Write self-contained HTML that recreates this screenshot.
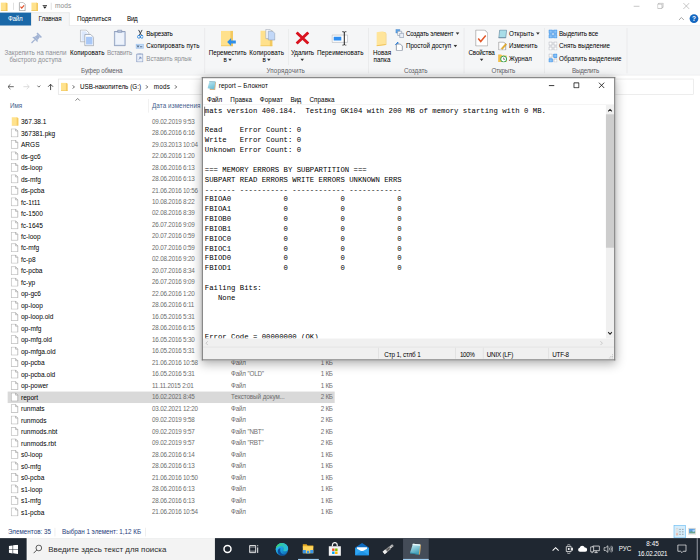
<!DOCTYPE html>
<html><head><meta charset="utf-8"><title>mods</title>
<style>
html,body{margin:0;padding:0;background:#fff;overflow:hidden}
body{width:700px;height:560px;position:relative;font-family:"Liberation Sans",sans-serif}
#s{position:absolute;left:0;top:0;width:1280px;height:1024px;transform:scale(0.546875);transform-origin:0 0;overflow:hidden;background:#fff}
#s div,#s span,#s svg{box-sizing:border-box}
.mono{font-family:"Liberation Mono",monospace}
</style></head><body><div id="s">
<div style="position:absolute;left:0.00px;top:0.00px;width:1280.00px;height:23.00px;background:#fff"></div>
<svg style="position:absolute;left:0.00px;top:3.50px" width="16.00" height="16.00" viewBox="0 0 16 16"><path d="M1.5 0.5h9.5l2.500 1.500v13.500H1.500z" fill="#ffe28c"/><path d="M10.500 0.500l3 1.500v13.500h-3z" fill="#f4ca62"/><path d="M1.500 14.500h12v1h-12z" fill="#eec258"/></svg>
<div style="position:absolute;left:23.50px;top:5.00px;width:1.00px;height:13.00px;background:#c8c8c8"></div>
<svg style="position:absolute;left:33.00px;top:3.50px" width="16.00" height="16.00" viewBox="0 0 16 16"><path d="M2.500 0.500h7l3.500 3.500v11.500h-10.500z" fill="#fff" stroke="#777" stroke-width="1"/><path d="M4.500 8l2.300 2.800 4.200-5" fill="none" stroke="#e0502a" stroke-width="2.200"/></svg>
<svg style="position:absolute;left:56.00px;top:3.50px" width="16.00" height="16.00" viewBox="0 0 16 16"><path d="M1.5 0.5h9.5l2.500 1.500v13.500H1.500z" fill="#ffe28c"/><path d="M10.500 0.500l3 1.500v13.500h-3z" fill="#f4ca62"/><path d="M1.500 14.500h12v1h-12z" fill="#eec258"/></svg>
<svg style="position:absolute;left:75.50px;top:6.00px" width="12.00" height="12.00" viewBox="0 0 12 12"><path d="M2 3h8v1.4H2z M2.5 6h7L6 10z" fill="#222"/></svg>
<div style="position:absolute;left:93.00px;top:5.00px;width:1.00px;height:13.00px;background:#c8c8c8"></div>
<span style="position:absolute;left:100.57px;top:4.09px;font-size:12px;line-height:15.60px;letter-spacing:0.162px;color:#8c8c8c;white-space:pre;">mods</span>
<svg style="position:absolute;left:1158.00px;top:5.00px" width="12.00" height="12.00" viewBox="0 0 12 12"><path d="M0.5 6.5h11" stroke="#9a9a9a" stroke-width="1"/></svg>
<svg style="position:absolute;left:1202.00px;top:5.00px" width="12.00" height="12.00" viewBox="0 0 12 12"><path d="M0.5 2.5h8v8h-8z M2.5 2.5v-2h8v8h-2" fill="none" stroke="#9a9a9a" stroke-width="1"/></svg>
<svg style="position:absolute;left:1249.00px;top:5.00px" width="12.00" height="12.00" viewBox="0 0 12 12"><path d="M0.5 0.5l11 11M11.5 0.5l-11 11" stroke="#9a9a9a" stroke-width="1"/></svg>
<div style="position:absolute;left:0.00px;top:23.00px;width:1280.00px;height:23.60px;background:#fff;border-bottom:1px solid #dadbdc"></div>
<div style="position:absolute;left:0.00px;top:23.00px;width:56.50px;height:23.60px;background:#1a68a8"></div>
<span style="position:absolute;left:14.83px;top:27.27px;font-size:11.5px;line-height:14.95px;letter-spacing:-0.495px;color:#fff;white-space:pre;">Файл</span>
<div style="position:absolute;left:56.50px;top:23.00px;width:70.00px;height:24.60px;background:#f5f6f7;border:1px solid #dadbdc;border-bottom:none"></div>
<span style="position:absolute;left:70.40px;top:27.27px;font-size:11.5px;line-height:14.95px;letter-spacing:-0.245px;color:#000;white-space:pre;">Главная</span>
<span style="position:absolute;left:140.80px;top:27.27px;font-size:11.5px;line-height:14.95px;letter-spacing:-0.133px;color:#000;white-space:pre;">Поделиться</span>
<span style="position:absolute;left:232.23px;top:27.27px;font-size:11.5px;line-height:14.95px;letter-spacing:-0.535px;color:#000;white-space:pre;">Вид</span>
<svg style="position:absolute;left:1240.00px;top:28.00px" width="12.00" height="12.00" viewBox="0 0 12 12"><path d="M1.5 8.5L6 4l4.5 4.5" fill="none" stroke="#777" stroke-width="1.2"/></svg>
<div style="position:absolute;left:1261.0px;top:26px;width:16px;height:16px;border-radius:8px;background:#1467c0;color:#fff;font-size:12px;font-weight:bold;line-height:16px;text-align:center">?</div>
<div style="position:absolute;left:0.00px;top:46.60px;width:1280.00px;height:91.40px;background:#f5f6f7;border-bottom:1px solid #dadbdc"></div>
<svg style="position:absolute;left:51.75px;top:58.15px" width="26.33" height="26.33" viewBox="-6 -6 12 12"><g transform="rotate(45)" fill="#a2b3d3"><path d="M-2.600 -4.850h5.200v1.300h-5.200z"/><path d="M-1.400 -3.650h2.800l0.400 3h-3.600z"/><path d="M-1.800 -0.650h3.600l1.300 1.600h-6.200z"/><path d="M-0.500 0.850h1v4h-1z"/></g></svg>
<span style="position:absolute;left:8.23px;top:89.07px;font-size:11.5px;line-height:14.95px;letter-spacing:0.055px;color:#8d8f94;white-space:pre;">Закрепить на панели</span>
<span style="position:absolute;left:17.37px;top:101.69px;font-size:11.5px;line-height:14.95px;letter-spacing:0.017px;color:#8d8f94;white-space:pre;">быстрого доступа</span>
<svg style="position:absolute;left:145.92px;top:54.49px" width="26.51" height="30.54" viewBox="0 0 14.500 16.700"><path d="M0.500 0.500h5.800l2.700 2.700v9h-8.500z" fill="#fff" stroke="#a3a9b3" stroke-width="0.700"/><path d="M1.600 1.800h4.200l2 2v7.300H1.600z" fill="#dbe7fb"/><path d="M5 5h6l2.800 2.800v8.400H5z" fill="#fff" stroke="#9199a6" stroke-width="0.700"/><path d="M6.200 7.200h6.500v7.800H6.200z" fill="#a9c8f7"/></svg>
<span style="position:absolute;left:128.00px;top:89.07px;font-size:11.5px;line-height:14.95px;letter-spacing:0.117px;color:#000;white-space:pre;">Копировать</span>
<svg style="position:absolute;left:208.09px;top:54.49px" width="21.94" height="30.54" viewBox="0 0 12 16.700"><path d="M0.500 2h11v14.200h-11z" fill="#cfdcf0" stroke="#7f8fb0" stroke-width="0.800"/><path d="M1.800 3.300h8.400v11.600H1.800z" fill="#eef3fb"/><path d="M4 0.400h4v2.400H4z" fill="#b7c4da" stroke="#7f8fb0" stroke-width="0.600"/></svg>
<span style="position:absolute;left:195.66px;top:89.07px;font-size:11.5px;line-height:14.95px;letter-spacing:-0.379px;color:#8d8f94;white-space:pre;">Вставить</span>
<svg style="position:absolute;left:250.88px;top:53.76px" width="11.34" height="17.01" viewBox="0 0 6.200 9.300"><path d="M1.300 0.300L4.300 6M4.900 0.300L1.900 6" stroke="#3d4450" stroke-width="1" fill="none"/><circle cx="1.600" cy="7.300" r="1.450" fill="none" stroke="#2d86dc" stroke-width="1"/><circle cx="4.600" cy="7.300" r="1.450" fill="none" stroke="#2d86dc" stroke-width="1"/></svg>
<span style="position:absolute;left:267.52px;top:54.70px;font-size:11.5px;line-height:14.95px;letter-spacing:-0.404px;color:#000;white-space:pre;">Вырезать</span>
<svg style="position:absolute;left:248.14px;top:79.91px" width="14.99" height="9.14" viewBox="0 0 8.200 5"><path d="M0.300 0.300h7.600v4.400H0.300z" fill="#c4dcf8" stroke="#8db7ea" stroke-width="0.600"/><path d="M1.500 1.500l0.900 2 0.900-2M4.300 3h2.400" stroke="#1f3550" stroke-width="0.600" fill="none"/></svg>
<span style="position:absolute;left:267.52px;top:77.46px;font-size:11.5px;line-height:14.95px;letter-spacing:0.135px;color:#000;white-space:pre;">Скопировать путь</span>
<svg style="position:absolute;left:248.50px;top:96.73px" width="13.35" height="17.19" viewBox="0 0 7.300 9.400"><path d="M0.500 1h6.300v8h-6.300z" fill="#e9eff9" stroke="#7f93bd" stroke-width="0.800"/><path d="M2.300 0.300h2.700v1.300H2.300z" fill="#aebbd4"/><path d="M2.500 6.500l2.200-2.200M3 4.200h1.800v1.800" stroke="#6f86b8" stroke-width="0.800" fill="none"/></svg>
<span style="position:absolute;left:267.52px;top:99.95px;font-size:11.5px;line-height:14.95px;letter-spacing:-0.109px;color:#8d8f94;white-space:pre;">Вставить ярлык</span>
<span style="position:absolute;left:148.11px;top:121.62px;font-size:11.5px;line-height:14.95px;letter-spacing:-0.188px;color:#5f6268;white-space:pre;">Буфер обмена</span>
<div style="position:absolute;left:373.94px;top:51.00px;width:1.00px;height:83.00px;background:#e1e2e3"></div>
<svg style="position:absolute;left:404.11px;top:55.77px" width="27.79" height="28.89" viewBox="0 0 15.200 15.800"><path d="M0 0h12v15.600H0z" fill="#ffe18c"/><path d="M9.500 0H12v15.600H9.500z" fill="#f3c95f"/><path d="M0 14.800h12v0.800H0z" fill="#eec255"/><path d="M6.200 11.400l4-3.900v2.300h4.700v3.200h-4.700v2.300z" fill="#2d8ee8"/></svg>
<span style="position:absolute;left:381.81px;top:89.07px;font-size:11.5px;line-height:14.95px;letter-spacing:-0.138px;color:#000;white-space:pre;">Переместить</span>
<span style="position:absolute;left:408.59px;top:101.69px;font-size:11.5px;line-height:14.95px;letter-spacing:-0.428px;color:#000;white-space:pre;">в</span>
<svg style="position:absolute;left:416.55px;top:107.34px" width="7.31" height="5.49" viewBox="0 0 4 3"><path d="M0 0h4L2 2.500z" fill="#333"/></svg>
<svg style="position:absolute;left:475.79px;top:52.66px" width="27.79" height="32.00" viewBox="0 0 15.200 17.500"><g transform="translate(0 1.700)"><path d="M0 0h12v15.600H0z" fill="#ffe18c"/><path d="M9.500 0H12v15.600H9.500z" fill="#f3c95f"/><path d="M0 14.800h12v0.800H0z" fill="#eec255"/></g><path d="M5.500 0.400h4.300l2.200 2.200v7H5.500z" fill="#f4f7fc" stroke="#a0a8b5" stroke-width="0.600"/><path d="M8 2.200h4.300l2.200 2.200v6.600H8z" fill="#c2d8f8" stroke="#8f9db5" stroke-width="0.600"/></svg>
<span style="position:absolute;left:455.86px;top:89.07px;font-size:11.5px;line-height:14.95px;letter-spacing:0.154px;color:#000;white-space:pre;">Копировать</span>
<span style="position:absolute;left:479.90px;top:101.69px;font-size:11.5px;line-height:14.95px;letter-spacing:-0.428px;color:#000;white-space:pre;">в</span>
<svg style="position:absolute;left:487.86px;top:107.34px" width="7.31" height="5.49" viewBox="0 0 4 3"><path d="M0 0h4L2 2.500z" fill="#333"/></svg>
<div style="position:absolute;left:526.63px;top:53.00px;width:1.00px;height:66.00px;background:#e4e5e6"></div>
<svg style="position:absolute;left:539.98px;top:57.23px" width="26.15" height="25.05" viewBox="0 0 14.300 13.700"><path d="M1.300 1.300l11.700 11.100M13 1.300L1.300 12.400" stroke="#d9131f" stroke-width="2.900" fill="none"/></svg>
<span style="position:absolute;left:532.11px;top:89.07px;font-size:11.5px;line-height:14.95px;letter-spacing:-0.264px;color:#000;white-space:pre;">Удалить</span>
<svg style="position:absolute;left:549.49px;top:106.97px" width="7.31" height="5.49" viewBox="0 0 4 3"><path d="M0 0h4L2 2.500z" fill="#333"/></svg>
<svg style="position:absolute;left:606.17px;top:56.69px" width="31.09" height="26.70" viewBox="0 0 17 14.600"><path d="M0.700 3.900h15.500v7.300H0.700z" fill="#fff" stroke="#b9bcc2" stroke-width="0.700"/><path d="M2.300 5.700h7.600v3.600H2.300z" fill="#2f8ef0"/><path d="M10.800 0.500h1.200Q12.900 0.500 12.900 1.500Q12.900 0.500 13.800 0.500H15M12.900 1.500V13.100M10.800 14.100h1.200Q12.900 14.100 12.900 13.100Q12.900 14.100 13.800 14.100H15" stroke="#222" stroke-width="1" fill="none"/></svg>
<span style="position:absolute;left:579.66px;top:89.07px;font-size:11.5px;line-height:14.95px;letter-spacing:0.056px;color:#000;white-space:pre;">Переименовать</span>
<span style="position:absolute;left:487.31px;top:121.62px;font-size:11.5px;line-height:14.95px;letter-spacing:0.179px;color:#5f6268;white-space:pre;">Упорядочить</span>
<div style="position:absolute;left:672.91px;top:51.00px;width:1.00px;height:83.00px;background:#e1e2e3"></div>
<svg style="position:absolute;left:687.54px;top:57.05px" width="19.38" height="28.16" viewBox="0 0 10.600 15.400"><path d="M0.300 1.200L6 0l3.500 1.500v12.300L0.300 15.200z" fill="#ffe59a"/><path d="M6 0l3.500 1.500 0.800 1v11l-0.800 0.300V2z" fill="#f2c75c"/><path d="M0.300 14.200l9.200-1.400v1L0.300 15.200z" fill="#f0c35a"/></svg>
<span style="position:absolute;left:682.06px;top:89.07px;font-size:11.5px;line-height:14.95px;letter-spacing:-0.078px;color:#000;white-space:pre;">Новая</span>
<span style="position:absolute;left:682.97px;top:101.69px;font-size:11.5px;line-height:14.95px;letter-spacing:0.111px;color:#000;white-space:pre;">папка</span>
<svg style="position:absolute;left:722.83px;top:53.39px" width="15.91" height="16.46" viewBox="0 0 8.700 9"><path d="M0.400 0.400h4v3.600h-4z" fill="#5aa3e8" stroke="#4b86c4" stroke-width="0.500"/><path d="M2.300 2.300h4v4.200h-4z" fill="#fff" stroke="#7f8ea6" stroke-width="0.600"/><path d="M4.300 4.300h4v4.300h-4z" fill="#e9eef8" stroke="#7f8ea6" stroke-width="0.600"/></svg>
<span style="position:absolute;left:742.40px;top:54.70px;font-size:11.5px;line-height:14.95px;letter-spacing:-0.312px;color:#000;white-space:pre;">Создать элемент</span>
<svg style="position:absolute;left:832.91px;top:59.43px" width="7.31" height="5.49" viewBox="0 0 4 3"><path d="M0 0h4L2 2.500z" fill="#333"/></svg>
<svg style="position:absolute;left:722.29px;top:75.89px" width="16.46" height="17.37" viewBox="0 0 9 9.500"><path d="M1.500 2.500h4l2 2v4.500h-6z" fill="#fff" stroke="#7f8a9a" stroke-width="0.8"/><path d="M0.500 3.500L3 0.500v2" stroke="#2b7bd3" stroke-width="1" fill="none"/></svg>
<span style="position:absolute;left:742.40px;top:77.46px;font-size:11.5px;line-height:14.95px;letter-spacing:-0.136px;color:#000;white-space:pre;">Простой доступ</span>
<svg style="position:absolute;left:829.26px;top:82.29px" width="7.31" height="5.49" viewBox="0 0 4 3"><path d="M0 0h4L2 2.500z" fill="#333"/></svg>
<span style="position:absolute;left:738.74px;top:121.62px;font-size:11.5px;line-height:14.95px;letter-spacing:-0.104px;color:#5f6268;white-space:pre;">Создать</span>
<div style="position:absolute;left:848.46px;top:51.00px;width:1.00px;height:83.00px;background:#e1e2e3"></div>
<svg style="position:absolute;left:868.57px;top:53.94px" width="23.77" height="31.09" viewBox="0 0 13 17"><path d="M0.500 0.500h9l3 3v13h-12z" fill="#fff" stroke="#9a9a9a" stroke-width="0.8"/><path d="M3 9l2.500 3 5-6" fill="none" stroke="#e2582a" stroke-width="1.500"/></svg>
<span style="position:absolute;left:856.69px;top:89.07px;font-size:11.5px;line-height:14.95px;letter-spacing:-0.369px;color:#000;white-space:pre;">Свойства</span>
<svg style="position:absolute;left:876.80px;top:106.97px" width="7.31" height="5.49" viewBox="0 0 4 3"><path d="M0 0h4L2 2.500z" fill="#333"/></svg>
<svg style="position:absolute;left:910.63px;top:53.94px" width="16.46" height="16.46" viewBox="0 0 9 9"><path d="M1.500 0.500h7L7.500 8.500h-7z" fill="#a8dde8" stroke="#6d8fa5" stroke-width="0.7"/><path d="M0.500 8.500h7" stroke="#55708a" stroke-width="1"/></svg>
<span style="position:absolute;left:930.74px;top:54.70px;font-size:11.5px;line-height:14.95px;letter-spacing:0.079px;color:#000;white-space:pre;">Открыть</span>
<svg style="position:absolute;left:980.11px;top:59.43px" width="7.31" height="5.49" viewBox="0 0 4 3"><path d="M0 0h4L2 2.500z" fill="#333"/></svg>
<svg style="position:absolute;left:910.63px;top:75.89px" width="16.46" height="16.46" viewBox="0 0 9 9"><path d="M0.500 0.500h5l2 2v6h-7z" fill="#fff" stroke="#8a8a8a" stroke-width="0.7"/><path d="M3 7l4.500-5 1 1-4.500 5z" fill="#f0b429" stroke="#a87a10" stroke-width="0.400"/></svg>
<span style="position:absolute;left:930.74px;top:77.46px;font-size:11.5px;line-height:14.95px;letter-spacing:0.030px;color:#000;white-space:pre;">Изменить</span>
<svg style="position:absolute;left:909.71px;top:97.83px" width="18.29" height="16.46" viewBox="0 0 10 9"><path d="M0.500 1h3l1 1h4.500v6.500h-8.500z" fill="#f2c14e"/><circle cx="6" cy="5.500" r="3" fill="#fff" stroke="#2e9e4f" stroke-width="1"/><path d="M6 4v1.700h1.500" stroke="#333" stroke-width="0.600" fill="none"/></svg>
<span style="position:absolute;left:930.74px;top:99.95px;font-size:11.5px;line-height:14.95px;letter-spacing:0.016px;color:#000;white-space:pre;">Журнал</span>
<span style="position:absolute;left:898.74px;top:121.62px;font-size:11.5px;line-height:14.95px;letter-spacing:-0.313px;color:#5f6268;white-space:pre;">Открыть</span>
<div style="position:absolute;left:994.74px;top:51.00px;width:1.00px;height:83.00px;background:#e1e2e3"></div>
<svg style="position:absolute;left:1002.97px;top:53.94px" width="16.46" height="16.46" viewBox="0 0 9 9"><path d="M0.400 0.400h3.400v3.400H0.400zM5.200 0.400h3.400v3.400H5.200zM0.400 5.200h3.400v3.400H0.400zM5.200 5.200h3.400v3.400H5.200z" fill="#8cc4f7" stroke="#3c90e6" stroke-width="0.800"/></svg>
<span style="position:absolute;left:1022.17px;top:54.70px;font-size:11.5px;line-height:14.95px;letter-spacing:-0.255px;color:#000;white-space:pre;">Выделить все</span>
<svg style="position:absolute;left:1002.97px;top:75.89px" width="16.46" height="16.46" viewBox="0 0 9 9"><path d="M0.400 0.400h3.200v3.200H0.400zM5.400 0.400h3.200v3.200H5.400zM0.400 5.400h3.200v3.200H0.400zM5.400 5.400h3.200v3.200H5.400z" fill="#fff" stroke="#b0b5bd" stroke-width="0.700"/></svg>
<span style="position:absolute;left:1022.17px;top:77.46px;font-size:11.5px;line-height:14.95px;letter-spacing:-0.097px;color:#000;white-space:pre;">Снять выделение</span>
<svg style="position:absolute;left:1002.97px;top:97.83px" width="16.46" height="16.46" viewBox="0 0 9 9"><path d="M5.200 0.400h3.400v3.400H5.200zM0.400 5.200h3.400v3.400H0.400z" fill="#8cc4f7" stroke="#3c90e6" stroke-width="0.800"/><path d="M0.400 0.400h3.200v3.200H0.400zM5.400 5.400h3.200v3.200H5.400z" fill="#fff" stroke="#b0b5bd" stroke-width="0.700"/></svg>
<span style="position:absolute;left:1022.17px;top:99.95px;font-size:11.5px;line-height:14.95px;letter-spacing:0.039px;color:#000;white-space:pre;">Обратить выделение</span>
<span style="position:absolute;left:1045.94px;top:121.62px;font-size:11.5px;line-height:14.95px;letter-spacing:-0.460px;color:#5f6268;white-space:pre;">Выделить</span>
<div style="position:absolute;left:1145.60px;top:51.00px;width:1.00px;height:83.00px;background:#e1e2e3"></div>
<div style="position:absolute;left:0.00px;top:138.00px;width:1280.00px;height:40.00px;background:#fff"></div>
<svg style="position:absolute;left:12.50px;top:152.30px" width="13.00" height="13.00" viewBox="0 0 16 16"><path d="M15 8H2M7.5 2.5L2 8l5.500 5.500" fill="none" stroke="#5c5c5c" stroke-width="2.100"/></svg>
<svg style="position:absolute;left:42.00px;top:152.30px" width="13.00" height="13.00" viewBox="0 0 16 16"><path d="M1 8h13M8.500 2.500L14 8l-5.500 5.500" fill="none" stroke="#d2d2d2" stroke-width="1.700"/></svg>
<svg style="position:absolute;left:67.00px;top:154.00px" width="8.00" height="8.00" viewBox="0 0 8 8"><path d="M1.300 2.500L4 5.300l2.700-2.800" fill="none" stroke="#505050" stroke-width="1.500"/></svg>
<svg style="position:absolute;left:86.00px;top:151.80px" width="13.00" height="14.00" viewBox="0 0 16 16"><path d="M8 15V2M2.500 7.500L8 2l5.500 5.500" fill="none" stroke="#3f3f3f" stroke-width="2.100"/></svg>
<div style="position:absolute;left:106.00px;top:144.00px;width:820.00px;height:29.00px;background:#fff;border:1px solid #d9d9d9"></div>
<svg style="position:absolute;left:110.00px;top:150.50px" width="16.00" height="16.00" viewBox="0 0 16 16"><path d="M1.5 0.5h9.5l2.500 1.500v13.500H1.500z" fill="#ffe28c"/><path d="M10.500 0.500l3 1.500v13.500h-3z" fill="#f4ca62"/><path d="M1.500 14.500h12v1h-12z" fill="#eec258"/></svg>
<svg style="position:absolute;left:130.00px;top:153.50px" width="10.00" height="10.00" viewBox="0 0 10 10"><path d="M3 2L6 5l-3 3" fill="none" stroke="#3a3a3a" stroke-width="1.500"/></svg>
<span style="position:absolute;left:146.29px;top:151.43px;font-size:11.5px;line-height:14.95px;letter-spacing:0.014px;color:#000;white-space:pre;">USB-накопитель (G:)</span>
<svg style="position:absolute;left:264.00px;top:153.50px" width="10.00" height="10.00" viewBox="0 0 10 10"><path d="M3 2L6 5l-3 3" fill="none" stroke="#3a3a3a" stroke-width="1.500"/></svg>
<span style="position:absolute;left:281.23px;top:151.43px;font-size:11.5px;line-height:14.95px;letter-spacing:0.376px;color:#000;white-space:pre;">mods</span>
<svg style="position:absolute;left:317.00px;top:153.50px" width="10.00" height="10.00" viewBox="0 0 10 10"><path d="M3 2L6 5l-3 3" fill="none" stroke="#3a3a3a" stroke-width="1.500"/></svg>
<div style="position:absolute;left:938.00px;top:144.00px;width:330.50px;height:29.00px;background:#fff;border:1px solid #dedede"></div>
<svg style="position:absolute;left:136.00px;top:178.00px" width="12.00" height="8.00" viewBox="0 0 12 8"><path d="M2 6L6 2l4 4" fill="none" stroke="#666" stroke-width="1.500"/></svg>
<span style="position:absolute;left:18.29px;top:186.35px;font-size:11.5px;line-height:14.95px;letter-spacing:-0.152px;color:#44608c;white-space:pre;">Имя</span>
<div style="position:absolute;left:271.00px;top:181.00px;width:1.00px;height:25.00px;background:#e5e5e5"></div>
<span style="position:absolute;left:277.94px;top:186.35px;font-size:11.5px;line-height:14.95px;letter-spacing:0.163px;color:#44608c;white-space:pre;">Дата изменения</span>
<div style="position:absolute;left:415.00px;top:181.00px;width:1.00px;height:25.00px;background:#e5e5e5"></div>
<span style="position:absolute;left:422.40px;top:186.35px;font-size:11.5px;line-height:14.95px;letter-spacing:-0.447px;color:#44608c;white-space:pre;">Тип</span>
<div style="position:absolute;left:549.00px;top:181.00px;width:1.00px;height:25.00px;background:#e5e5e5"></div>
<span style="position:absolute;left:557.71px;top:186.35px;font-size:11.5px;line-height:14.95px;letter-spacing:-0.461px;color:#44608c;white-space:pre;">Размер</span>
<div style="position:absolute;left:616.00px;top:181.00px;width:1.00px;height:25.00px;background:#e5e5e5"></div>
<svg style="position:absolute;left:20.00px;top:214.00px" width="16.00" height="16.00" viewBox="0 0 16 16"><path d="M1.5 0.5h9.5l2.500 1.500v13.500H1.500z" fill="#ffe28c"/><path d="M10.500 0.500l3 1.500v13.500h-3z" fill="#f4ca62"/><path d="M1.500 14.500h12v1h-12z" fill="#eec258"/></svg>
<span style="position:absolute;left:38.30px;top:216.10px;font-size:12px;line-height:15.60px;letter-spacing:0.000px;color:#000;white-space:pre;">367.38.1</span>
<span style="position:absolute;left:278.00px;top:215.03px;font-size:11.5px;line-height:14.95px;letter-spacing:-0.360px;color:#6d6d6d;white-space:pre;">09.02.2019 9:53</span>
<span style="position:absolute;left:422.50px;top:215.33px;font-size:11.5px;line-height:14.95px;letter-spacing:-0.315px;color:#6d6d6d;white-space:pre;">Папка с файлами</span>
<svg style="position:absolute;left:20.00px;top:235.00px" width="16.00" height="16.00" viewBox="0 0 16 16"><path d="M0.500 0.500h8l4 4v11h-12z" fill="#fff" stroke="#8f8f8f" stroke-width="1"/><path d="M8.500 0.500v4h4" fill="none" stroke="#8f8f8f" stroke-width="1"/></svg>
<span style="position:absolute;left:38.30px;top:237.10px;font-size:12px;line-height:15.60px;letter-spacing:0.000px;color:#000;white-space:pre;">367381.pkg</span>
<span style="position:absolute;left:278.00px;top:236.03px;font-size:11.5px;line-height:14.95px;letter-spacing:-0.360px;color:#6d6d6d;white-space:pre;">28.06.2016 6:16</span>
<span style="position:absolute;left:422.50px;top:236.33px;font-size:11.5px;line-height:14.95px;letter-spacing:-0.320px;color:#6d6d6d;white-space:pre;">Файл "PKG"</span>
<span style="position:absolute;left:586.33px;top:236.03px;font-size:11.5px;line-height:14.95px;letter-spacing:-0.417px;color:#6d6d6d;white-space:pre;">1 КБ</span>
<svg style="position:absolute;left:20.00px;top:256.00px" width="16.00" height="16.00" viewBox="0 0 16 16"><path d="M0.500 0.500h8l4 4v11h-12z" fill="#fff" stroke="#8f8f8f" stroke-width="1"/><path d="M8.500 0.500v4h4" fill="none" stroke="#8f8f8f" stroke-width="1"/></svg>
<span style="position:absolute;left:38.30px;top:258.10px;font-size:12px;line-height:15.60px;letter-spacing:0.000px;color:#000;white-space:pre;">ARGS</span>
<span style="position:absolute;left:278.00px;top:257.02px;font-size:11.5px;line-height:14.95px;letter-spacing:-0.364px;color:#6d6d6d;white-space:pre;">29.03.2013 10:04</span>
<span style="position:absolute;left:422.50px;top:257.32px;font-size:11.5px;line-height:14.95px;letter-spacing:-0.353px;color:#6d6d6d;white-space:pre;">Файл</span>
<span style="position:absolute;left:586.33px;top:257.02px;font-size:11.5px;line-height:14.95px;letter-spacing:-0.417px;color:#6d6d6d;white-space:pre;">1 КБ</span>
<svg style="position:absolute;left:20.00px;top:277.00px" width="16.00" height="16.00" viewBox="0 0 16 16"><path d="M0.500 0.500h8l4 4v11h-12z" fill="#fff" stroke="#8f8f8f" stroke-width="1"/><path d="M8.500 0.500v4h4" fill="none" stroke="#8f8f8f" stroke-width="1"/></svg>
<span style="position:absolute;left:38.30px;top:279.10px;font-size:12px;line-height:15.60px;letter-spacing:0.000px;color:#000;white-space:pre;">ds-gc6</span>
<span style="position:absolute;left:278.00px;top:278.02px;font-size:11.5px;line-height:14.95px;letter-spacing:-0.360px;color:#6d6d6d;white-space:pre;">22.06.2016 1:20</span>
<span style="position:absolute;left:422.50px;top:278.32px;font-size:11.5px;line-height:14.95px;letter-spacing:-0.353px;color:#6d6d6d;white-space:pre;">Файл</span>
<span style="position:absolute;left:586.33px;top:278.02px;font-size:11.5px;line-height:14.95px;letter-spacing:-0.417px;color:#6d6d6d;white-space:pre;">1 КБ</span>
<svg style="position:absolute;left:20.00px;top:298.00px" width="16.00" height="16.00" viewBox="0 0 16 16"><path d="M0.500 0.500h8l4 4v11h-12z" fill="#fff" stroke="#8f8f8f" stroke-width="1"/><path d="M8.500 0.500v4h4" fill="none" stroke="#8f8f8f" stroke-width="1"/></svg>
<span style="position:absolute;left:38.30px;top:300.10px;font-size:12px;line-height:15.60px;letter-spacing:0.000px;color:#000;white-space:pre;">ds-loop</span>
<span style="position:absolute;left:278.00px;top:299.02px;font-size:11.5px;line-height:14.95px;letter-spacing:-0.360px;color:#6d6d6d;white-space:pre;">28.06.2016 6:13</span>
<span style="position:absolute;left:422.50px;top:299.32px;font-size:11.5px;line-height:14.95px;letter-spacing:-0.353px;color:#6d6d6d;white-space:pre;">Файл</span>
<span style="position:absolute;left:586.33px;top:299.02px;font-size:11.5px;line-height:14.95px;letter-spacing:-0.417px;color:#6d6d6d;white-space:pre;">1 КБ</span>
<svg style="position:absolute;left:20.00px;top:319.00px" width="16.00" height="16.00" viewBox="0 0 16 16"><path d="M0.500 0.500h8l4 4v11h-12z" fill="#fff" stroke="#8f8f8f" stroke-width="1"/><path d="M8.500 0.500v4h4" fill="none" stroke="#8f8f8f" stroke-width="1"/></svg>
<span style="position:absolute;left:38.30px;top:321.10px;font-size:12px;line-height:15.60px;letter-spacing:0.000px;color:#000;white-space:pre;">ds-mfg</span>
<span style="position:absolute;left:278.00px;top:320.02px;font-size:11.5px;line-height:14.95px;letter-spacing:-0.360px;color:#6d6d6d;white-space:pre;">28.06.2016 6:13</span>
<span style="position:absolute;left:422.50px;top:320.32px;font-size:11.5px;line-height:14.95px;letter-spacing:-0.353px;color:#6d6d6d;white-space:pre;">Файл</span>
<span style="position:absolute;left:586.33px;top:320.02px;font-size:11.5px;line-height:14.95px;letter-spacing:-0.417px;color:#6d6d6d;white-space:pre;">1 КБ</span>
<svg style="position:absolute;left:20.00px;top:340.00px" width="16.00" height="16.00" viewBox="0 0 16 16"><path d="M0.500 0.500h8l4 4v11h-12z" fill="#fff" stroke="#8f8f8f" stroke-width="1"/><path d="M8.500 0.500v4h4" fill="none" stroke="#8f8f8f" stroke-width="1"/></svg>
<span style="position:absolute;left:38.30px;top:342.10px;font-size:12px;line-height:15.60px;letter-spacing:0.000px;color:#000;white-space:pre;">ds-pcba</span>
<span style="position:absolute;left:278.00px;top:341.02px;font-size:11.5px;line-height:14.95px;letter-spacing:-0.364px;color:#6d6d6d;white-space:pre;">21.06.2016 10:56</span>
<span style="position:absolute;left:422.50px;top:341.32px;font-size:11.5px;line-height:14.95px;letter-spacing:-0.353px;color:#6d6d6d;white-space:pre;">Файл</span>
<span style="position:absolute;left:586.33px;top:341.02px;font-size:11.5px;line-height:14.95px;letter-spacing:-0.417px;color:#6d6d6d;white-space:pre;">1 КБ</span>
<svg style="position:absolute;left:20.00px;top:361.00px" width="16.00" height="16.00" viewBox="0 0 16 16"><path d="M0.500 0.500h8l4 4v11h-12z" fill="#fff" stroke="#8f8f8f" stroke-width="1"/><path d="M8.500 0.500v4h4" fill="none" stroke="#8f8f8f" stroke-width="1"/></svg>
<span style="position:absolute;left:38.30px;top:363.10px;font-size:12px;line-height:15.60px;letter-spacing:0.000px;color:#000;white-space:pre;">fc-1t11</span>
<span style="position:absolute;left:278.00px;top:362.02px;font-size:11.5px;line-height:14.95px;letter-spacing:-0.360px;color:#6d6d6d;white-space:pre;">10.08.2016 8:22</span>
<span style="position:absolute;left:422.50px;top:362.32px;font-size:11.5px;line-height:14.95px;letter-spacing:-0.353px;color:#6d6d6d;white-space:pre;">Файл</span>
<span style="position:absolute;left:586.33px;top:362.02px;font-size:11.5px;line-height:14.95px;letter-spacing:-0.417px;color:#6d6d6d;white-space:pre;">1 КБ</span>
<svg style="position:absolute;left:20.00px;top:382.00px" width="16.00" height="16.00" viewBox="0 0 16 16"><path d="M0.500 0.500h8l4 4v11h-12z" fill="#fff" stroke="#8f8f8f" stroke-width="1"/><path d="M8.500 0.500v4h4" fill="none" stroke="#8f8f8f" stroke-width="1"/></svg>
<span style="position:absolute;left:38.30px;top:384.10px;font-size:12px;line-height:15.60px;letter-spacing:0.000px;color:#000;white-space:pre;">fc-1500</span>
<span style="position:absolute;left:278.00px;top:383.02px;font-size:11.5px;line-height:14.95px;letter-spacing:-0.360px;color:#6d6d6d;white-space:pre;">02.08.2016 8:39</span>
<span style="position:absolute;left:422.50px;top:383.32px;font-size:11.5px;line-height:14.95px;letter-spacing:-0.353px;color:#6d6d6d;white-space:pre;">Файл</span>
<span style="position:absolute;left:586.33px;top:383.02px;font-size:11.5px;line-height:14.95px;letter-spacing:-0.417px;color:#6d6d6d;white-space:pre;">1 КБ</span>
<svg style="position:absolute;left:20.00px;top:403.00px" width="16.00" height="16.00" viewBox="0 0 16 16"><path d="M0.500 0.500h8l4 4v11h-12z" fill="#fff" stroke="#8f8f8f" stroke-width="1"/><path d="M8.500 0.500v4h4" fill="none" stroke="#8f8f8f" stroke-width="1"/></svg>
<span style="position:absolute;left:38.30px;top:405.10px;font-size:12px;line-height:15.60px;letter-spacing:0.000px;color:#000;white-space:pre;">fc-1645</span>
<span style="position:absolute;left:278.00px;top:404.02px;font-size:11.5px;line-height:14.95px;letter-spacing:-0.360px;color:#6d6d6d;white-space:pre;">26.07.2016 9:09</span>
<span style="position:absolute;left:422.50px;top:404.32px;font-size:11.5px;line-height:14.95px;letter-spacing:-0.353px;color:#6d6d6d;white-space:pre;">Файл</span>
<span style="position:absolute;left:586.33px;top:404.02px;font-size:11.5px;line-height:14.95px;letter-spacing:-0.417px;color:#6d6d6d;white-space:pre;">1 КБ</span>
<svg style="position:absolute;left:20.00px;top:424.00px" width="16.00" height="16.00" viewBox="0 0 16 16"><path d="M0.500 0.500h8l4 4v11h-12z" fill="#fff" stroke="#8f8f8f" stroke-width="1"/><path d="M8.500 0.500v4h4" fill="none" stroke="#8f8f8f" stroke-width="1"/></svg>
<span style="position:absolute;left:38.30px;top:426.10px;font-size:12px;line-height:15.60px;letter-spacing:0.000px;color:#000;white-space:pre;">fc-loop</span>
<span style="position:absolute;left:278.00px;top:425.02px;font-size:11.5px;line-height:14.95px;letter-spacing:-0.360px;color:#6d6d6d;white-space:pre;">20.07.2016 0:59</span>
<span style="position:absolute;left:422.50px;top:425.32px;font-size:11.5px;line-height:14.95px;letter-spacing:-0.353px;color:#6d6d6d;white-space:pre;">Файл</span>
<span style="position:absolute;left:586.33px;top:425.02px;font-size:11.5px;line-height:14.95px;letter-spacing:-0.417px;color:#6d6d6d;white-space:pre;">1 КБ</span>
<svg style="position:absolute;left:20.00px;top:445.00px" width="16.00" height="16.00" viewBox="0 0 16 16"><path d="M0.500 0.500h8l4 4v11h-12z" fill="#fff" stroke="#8f8f8f" stroke-width="1"/><path d="M8.500 0.500v4h4" fill="none" stroke="#8f8f8f" stroke-width="1"/></svg>
<span style="position:absolute;left:38.30px;top:447.10px;font-size:12px;line-height:15.60px;letter-spacing:0.000px;color:#000;white-space:pre;">fc-mfg</span>
<span style="position:absolute;left:278.00px;top:446.02px;font-size:11.5px;line-height:14.95px;letter-spacing:-0.360px;color:#6d6d6d;white-space:pre;">20.07.2016 0:59</span>
<span style="position:absolute;left:422.50px;top:446.32px;font-size:11.5px;line-height:14.95px;letter-spacing:-0.353px;color:#6d6d6d;white-space:pre;">Файл</span>
<span style="position:absolute;left:586.33px;top:446.02px;font-size:11.5px;line-height:14.95px;letter-spacing:-0.417px;color:#6d6d6d;white-space:pre;">1 КБ</span>
<svg style="position:absolute;left:20.00px;top:466.00px" width="16.00" height="16.00" viewBox="0 0 16 16"><path d="M0.500 0.500h8l4 4v11h-12z" fill="#fff" stroke="#8f8f8f" stroke-width="1"/><path d="M8.500 0.500v4h4" fill="none" stroke="#8f8f8f" stroke-width="1"/></svg>
<span style="position:absolute;left:38.30px;top:468.10px;font-size:12px;line-height:15.60px;letter-spacing:0.000px;color:#000;white-space:pre;">fc-p8</span>
<span style="position:absolute;left:278.00px;top:467.02px;font-size:11.5px;line-height:14.95px;letter-spacing:-0.360px;color:#6d6d6d;white-space:pre;">02.08.2016 9:20</span>
<span style="position:absolute;left:422.50px;top:467.32px;font-size:11.5px;line-height:14.95px;letter-spacing:-0.353px;color:#6d6d6d;white-space:pre;">Файл</span>
<span style="position:absolute;left:586.33px;top:467.02px;font-size:11.5px;line-height:14.95px;letter-spacing:-0.417px;color:#6d6d6d;white-space:pre;">1 КБ</span>
<svg style="position:absolute;left:20.00px;top:487.00px" width="16.00" height="16.00" viewBox="0 0 16 16"><path d="M0.500 0.500h8l4 4v11h-12z" fill="#fff" stroke="#8f8f8f" stroke-width="1"/><path d="M8.500 0.500v4h4" fill="none" stroke="#8f8f8f" stroke-width="1"/></svg>
<span style="position:absolute;left:38.30px;top:489.10px;font-size:12px;line-height:15.60px;letter-spacing:0.000px;color:#000;white-space:pre;">fc-pcba</span>
<span style="position:absolute;left:278.00px;top:488.02px;font-size:11.5px;line-height:14.95px;letter-spacing:-0.360px;color:#6d6d6d;white-space:pre;">20.07.2016 8:34</span>
<span style="position:absolute;left:422.50px;top:488.32px;font-size:11.5px;line-height:14.95px;letter-spacing:-0.353px;color:#6d6d6d;white-space:pre;">Файл</span>
<span style="position:absolute;left:586.33px;top:488.02px;font-size:11.5px;line-height:14.95px;letter-spacing:-0.417px;color:#6d6d6d;white-space:pre;">1 КБ</span>
<svg style="position:absolute;left:20.00px;top:508.00px" width="16.00" height="16.00" viewBox="0 0 16 16"><path d="M0.500 0.500h8l4 4v11h-12z" fill="#fff" stroke="#8f8f8f" stroke-width="1"/><path d="M8.500 0.500v4h4" fill="none" stroke="#8f8f8f" stroke-width="1"/></svg>
<span style="position:absolute;left:38.30px;top:510.10px;font-size:12px;line-height:15.60px;letter-spacing:0.000px;color:#000;white-space:pre;">fc-yp</span>
<span style="position:absolute;left:278.00px;top:509.02px;font-size:11.5px;line-height:14.95px;letter-spacing:-0.360px;color:#6d6d6d;white-space:pre;">26.07.2016 9:09</span>
<span style="position:absolute;left:422.50px;top:509.32px;font-size:11.5px;line-height:14.95px;letter-spacing:-0.353px;color:#6d6d6d;white-space:pre;">Файл</span>
<span style="position:absolute;left:586.33px;top:509.02px;font-size:11.5px;line-height:14.95px;letter-spacing:-0.417px;color:#6d6d6d;white-space:pre;">1 КБ</span>
<svg style="position:absolute;left:20.00px;top:529.00px" width="16.00" height="16.00" viewBox="0 0 16 16"><path d="M0.500 0.500h8l4 4v11h-12z" fill="#fff" stroke="#8f8f8f" stroke-width="1"/><path d="M8.500 0.500v4h4" fill="none" stroke="#8f8f8f" stroke-width="1"/></svg>
<span style="position:absolute;left:38.30px;top:531.10px;font-size:12px;line-height:15.60px;letter-spacing:0.000px;color:#000;white-space:pre;">op-gc6</span>
<span style="position:absolute;left:278.00px;top:530.02px;font-size:11.5px;line-height:14.95px;letter-spacing:-0.360px;color:#6d6d6d;white-space:pre;">22.06.2016 1:20</span>
<span style="position:absolute;left:422.50px;top:530.32px;font-size:11.5px;line-height:14.95px;letter-spacing:-0.353px;color:#6d6d6d;white-space:pre;">Файл</span>
<span style="position:absolute;left:586.33px;top:530.02px;font-size:11.5px;line-height:14.95px;letter-spacing:-0.417px;color:#6d6d6d;white-space:pre;">1 КБ</span>
<svg style="position:absolute;left:20.00px;top:550.00px" width="16.00" height="16.00" viewBox="0 0 16 16"><path d="M0.500 0.500h8l4 4v11h-12z" fill="#fff" stroke="#8f8f8f" stroke-width="1"/><path d="M8.500 0.500v4h4" fill="none" stroke="#8f8f8f" stroke-width="1"/></svg>
<span style="position:absolute;left:38.30px;top:552.10px;font-size:12px;line-height:15.60px;letter-spacing:0.000px;color:#000;white-space:pre;">op-loop</span>
<span style="position:absolute;left:278.00px;top:551.02px;font-size:11.5px;line-height:14.95px;letter-spacing:-0.357px;color:#6d6d6d;white-space:pre;">28.06.2016 6:11</span>
<span style="position:absolute;left:422.50px;top:551.32px;font-size:11.5px;line-height:14.95px;letter-spacing:-0.353px;color:#6d6d6d;white-space:pre;">Файл</span>
<span style="position:absolute;left:586.33px;top:551.02px;font-size:11.5px;line-height:14.95px;letter-spacing:-0.417px;color:#6d6d6d;white-space:pre;">1 КБ</span>
<svg style="position:absolute;left:20.00px;top:571.00px" width="16.00" height="16.00" viewBox="0 0 16 16"><path d="M0.500 0.500h8l4 4v11h-12z" fill="#fff" stroke="#8f8f8f" stroke-width="1"/><path d="M8.500 0.500v4h4" fill="none" stroke="#8f8f8f" stroke-width="1"/></svg>
<span style="position:absolute;left:38.30px;top:573.10px;font-size:12px;line-height:15.60px;letter-spacing:0.000px;color:#000;white-space:pre;">op-loop.old</span>
<span style="position:absolute;left:278.00px;top:572.02px;font-size:11.5px;line-height:14.95px;letter-spacing:-0.360px;color:#6d6d6d;white-space:pre;">16.05.2016 5:31</span>
<span style="position:absolute;left:422.50px;top:572.32px;font-size:11.5px;line-height:14.95px;letter-spacing:-0.316px;color:#6d6d6d;white-space:pre;">Файл "OLD"</span>
<span style="position:absolute;left:586.33px;top:572.02px;font-size:11.5px;line-height:14.95px;letter-spacing:-0.417px;color:#6d6d6d;white-space:pre;">1 КБ</span>
<svg style="position:absolute;left:20.00px;top:592.00px" width="16.00" height="16.00" viewBox="0 0 16 16"><path d="M0.500 0.500h8l4 4v11h-12z" fill="#fff" stroke="#8f8f8f" stroke-width="1"/><path d="M8.500 0.500v4h4" fill="none" stroke="#8f8f8f" stroke-width="1"/></svg>
<span style="position:absolute;left:38.30px;top:594.10px;font-size:12px;line-height:15.60px;letter-spacing:0.000px;color:#000;white-space:pre;">op-mfg</span>
<span style="position:absolute;left:278.00px;top:593.02px;font-size:11.5px;line-height:14.95px;letter-spacing:-0.360px;color:#6d6d6d;white-space:pre;">28.06.2016 6:15</span>
<span style="position:absolute;left:422.50px;top:593.32px;font-size:11.5px;line-height:14.95px;letter-spacing:-0.353px;color:#6d6d6d;white-space:pre;">Файл</span>
<span style="position:absolute;left:586.33px;top:593.02px;font-size:11.5px;line-height:14.95px;letter-spacing:-0.417px;color:#6d6d6d;white-space:pre;">1 КБ</span>
<svg style="position:absolute;left:20.00px;top:613.00px" width="16.00" height="16.00" viewBox="0 0 16 16"><path d="M0.500 0.500h8l4 4v11h-12z" fill="#fff" stroke="#8f8f8f" stroke-width="1"/><path d="M8.500 0.500v4h4" fill="none" stroke="#8f8f8f" stroke-width="1"/></svg>
<span style="position:absolute;left:38.30px;top:615.10px;font-size:12px;line-height:15.60px;letter-spacing:0.000px;color:#000;white-space:pre;">op-mfg.old</span>
<span style="position:absolute;left:278.00px;top:614.02px;font-size:11.5px;line-height:14.95px;letter-spacing:-0.360px;color:#6d6d6d;white-space:pre;">16.05.2016 5:30</span>
<span style="position:absolute;left:422.50px;top:614.32px;font-size:11.5px;line-height:14.95px;letter-spacing:-0.316px;color:#6d6d6d;white-space:pre;">Файл "OLD"</span>
<span style="position:absolute;left:586.33px;top:614.02px;font-size:11.5px;line-height:14.95px;letter-spacing:-0.417px;color:#6d6d6d;white-space:pre;">1 КБ</span>
<svg style="position:absolute;left:20.00px;top:634.00px" width="16.00" height="16.00" viewBox="0 0 16 16"><path d="M0.500 0.500h8l4 4v11h-12z" fill="#fff" stroke="#8f8f8f" stroke-width="1"/><path d="M8.500 0.500v4h4" fill="none" stroke="#8f8f8f" stroke-width="1"/></svg>
<span style="position:absolute;left:38.30px;top:636.10px;font-size:12px;line-height:15.60px;letter-spacing:0.000px;color:#000;white-space:pre;">op-mfga.old</span>
<span style="position:absolute;left:278.00px;top:635.02px;font-size:11.5px;line-height:14.95px;letter-spacing:-0.360px;color:#6d6d6d;white-space:pre;">16.05.2016 5:31</span>
<span style="position:absolute;left:422.50px;top:635.32px;font-size:11.5px;line-height:14.95px;letter-spacing:-0.316px;color:#6d6d6d;white-space:pre;">Файл "OLD"</span>
<span style="position:absolute;left:586.33px;top:635.02px;font-size:11.5px;line-height:14.95px;letter-spacing:-0.417px;color:#6d6d6d;white-space:pre;">1 КБ</span>
<svg style="position:absolute;left:20.00px;top:655.00px" width="16.00" height="16.00" viewBox="0 0 16 16"><path d="M0.500 0.500h8l4 4v11h-12z" fill="#fff" stroke="#8f8f8f" stroke-width="1"/><path d="M8.500 0.500v4h4" fill="none" stroke="#8f8f8f" stroke-width="1"/></svg>
<span style="position:absolute;left:38.30px;top:657.10px;font-size:12px;line-height:15.60px;letter-spacing:0.000px;color:#000;white-space:pre;">op-pcba</span>
<span style="position:absolute;left:278.00px;top:656.02px;font-size:11.5px;line-height:14.95px;letter-spacing:-0.364px;color:#6d6d6d;white-space:pre;">21.06.2016 10:58</span>
<span style="position:absolute;left:422.50px;top:656.32px;font-size:11.5px;line-height:14.95px;letter-spacing:-0.353px;color:#6d6d6d;white-space:pre;">Файл</span>
<span style="position:absolute;left:586.33px;top:656.02px;font-size:11.5px;line-height:14.95px;letter-spacing:-0.417px;color:#6d6d6d;white-space:pre;">1 КБ</span>
<svg style="position:absolute;left:20.00px;top:676.00px" width="16.00" height="16.00" viewBox="0 0 16 16"><path d="M0.500 0.500h8l4 4v11h-12z" fill="#fff" stroke="#8f8f8f" stroke-width="1"/><path d="M8.500 0.500v4h4" fill="none" stroke="#8f8f8f" stroke-width="1"/></svg>
<span style="position:absolute;left:38.30px;top:678.10px;font-size:12px;line-height:15.60px;letter-spacing:0.000px;color:#000;white-space:pre;">op-pcba.old</span>
<span style="position:absolute;left:278.00px;top:677.02px;font-size:11.5px;line-height:14.95px;letter-spacing:-0.360px;color:#6d6d6d;white-space:pre;">16.05.2016 5:31</span>
<span style="position:absolute;left:422.50px;top:677.32px;font-size:11.5px;line-height:14.95px;letter-spacing:-0.316px;color:#6d6d6d;white-space:pre;">Файл "OLD"</span>
<span style="position:absolute;left:586.33px;top:677.02px;font-size:11.5px;line-height:14.95px;letter-spacing:-0.417px;color:#6d6d6d;white-space:pre;">1 КБ</span>
<svg style="position:absolute;left:20.00px;top:697.00px" width="16.00" height="16.00" viewBox="0 0 16 16"><path d="M0.500 0.500h8l4 4v11h-12z" fill="#fff" stroke="#8f8f8f" stroke-width="1"/><path d="M8.500 0.500v4h4" fill="none" stroke="#8f8f8f" stroke-width="1"/></svg>
<span style="position:absolute;left:38.30px;top:699.10px;font-size:12px;line-height:15.60px;letter-spacing:0.000px;color:#000;white-space:pre;">op-power</span>
<span style="position:absolute;left:278.00px;top:698.02px;font-size:11.5px;line-height:14.95px;letter-spacing:-0.353px;color:#6d6d6d;white-space:pre;">11.11.2015 2:01</span>
<span style="position:absolute;left:422.50px;top:698.32px;font-size:11.5px;line-height:14.95px;letter-spacing:-0.353px;color:#6d6d6d;white-space:pre;">Файл</span>
<span style="position:absolute;left:586.33px;top:698.02px;font-size:11.5px;line-height:14.95px;letter-spacing:-0.417px;color:#6d6d6d;white-space:pre;">1 КБ</span>
<div style="position:absolute;left:14.00px;top:715.50px;width:598.00px;height:21.00px;background:#d9d9d9"></div>
<svg style="position:absolute;left:20.00px;top:718.00px" width="16.00" height="16.00" viewBox="0 0 16 16"><path d="M0.500 0.500h8l4 4v11h-12z" fill="#fff" stroke="#8f8f8f" stroke-width="1"/><path d="M8.500 0.500v4h4" fill="none" stroke="#8f8f8f" stroke-width="1"/></svg>
<span style="position:absolute;left:38.30px;top:720.10px;font-size:12px;line-height:15.60px;letter-spacing:0.000px;color:#000;white-space:pre;">report</span>
<span style="position:absolute;left:278.00px;top:719.02px;font-size:11.5px;line-height:14.95px;letter-spacing:-0.360px;color:#6d6d6d;white-space:pre;">16.02.2021 8:45</span>
<span style="position:absolute;left:422.50px;top:719.32px;font-size:11.5px;line-height:14.95px;letter-spacing:-0.140px;color:#6d6d6d;white-space:pre;">Текстовый докум...</span>
<span style="position:absolute;left:586.33px;top:719.02px;font-size:11.5px;line-height:14.95px;letter-spacing:-0.417px;color:#6d6d6d;white-space:pre;">2 КБ</span>
<svg style="position:absolute;left:20.00px;top:739.00px" width="16.00" height="16.00" viewBox="0 0 16 16"><path d="M0.500 0.500h8l4 4v11h-12z" fill="#fff" stroke="#8f8f8f" stroke-width="1"/><path d="M8.500 0.500v4h4" fill="none" stroke="#8f8f8f" stroke-width="1"/></svg>
<span style="position:absolute;left:38.30px;top:741.10px;font-size:12px;line-height:15.60px;letter-spacing:0.000px;color:#000;white-space:pre;">runmats</span>
<span style="position:absolute;left:278.00px;top:740.02px;font-size:11.5px;line-height:14.95px;letter-spacing:-0.364px;color:#6d6d6d;white-space:pre;">03.02.2021 12:20</span>
<span style="position:absolute;left:422.50px;top:740.32px;font-size:11.5px;line-height:14.95px;letter-spacing:-0.353px;color:#6d6d6d;white-space:pre;">Файл</span>
<span style="position:absolute;left:586.33px;top:740.02px;font-size:11.5px;line-height:14.95px;letter-spacing:-0.417px;color:#6d6d6d;white-space:pre;">2 КБ</span>
<svg style="position:absolute;left:20.00px;top:760.00px" width="16.00" height="16.00" viewBox="0 0 16 16"><path d="M0.500 0.500h8l4 4v11h-12z" fill="#fff" stroke="#8f8f8f" stroke-width="1"/><path d="M8.500 0.500v4h4" fill="none" stroke="#8f8f8f" stroke-width="1"/></svg>
<span style="position:absolute;left:38.30px;top:762.10px;font-size:12px;line-height:15.60px;letter-spacing:0.000px;color:#000;white-space:pre;">runmods</span>
<span style="position:absolute;left:278.00px;top:761.02px;font-size:11.5px;line-height:14.95px;letter-spacing:-0.360px;color:#6d6d6d;white-space:pre;">09.02.2019 9:58</span>
<span style="position:absolute;left:422.50px;top:761.32px;font-size:11.5px;line-height:14.95px;letter-spacing:-0.353px;color:#6d6d6d;white-space:pre;">Файл</span>
<span style="position:absolute;left:586.33px;top:761.02px;font-size:11.5px;line-height:14.95px;letter-spacing:-0.417px;color:#6d6d6d;white-space:pre;">2 КБ</span>
<svg style="position:absolute;left:20.00px;top:781.00px" width="16.00" height="16.00" viewBox="0 0 16 16"><path d="M0.500 0.500h8l4 4v11h-12z" fill="#fff" stroke="#8f8f8f" stroke-width="1"/><path d="M8.500 0.500v4h4" fill="none" stroke="#8f8f8f" stroke-width="1"/></svg>
<span style="position:absolute;left:38.30px;top:783.10px;font-size:12px;line-height:15.60px;letter-spacing:0.000px;color:#000;white-space:pre;">runmods.nbt</span>
<span style="position:absolute;left:278.00px;top:782.02px;font-size:11.5px;line-height:14.95px;letter-spacing:-0.360px;color:#6d6d6d;white-space:pre;">09.02.2019 9:57</span>
<span style="position:absolute;left:422.50px;top:782.32px;font-size:11.5px;line-height:14.95px;letter-spacing:-0.313px;color:#6d6d6d;white-space:pre;">Файл "NBT"</span>
<span style="position:absolute;left:586.33px;top:782.02px;font-size:11.5px;line-height:14.95px;letter-spacing:-0.417px;color:#6d6d6d;white-space:pre;">2 КБ</span>
<svg style="position:absolute;left:20.00px;top:802.00px" width="16.00" height="16.00" viewBox="0 0 16 16"><path d="M0.500 0.500h8l4 4v11h-12z" fill="#fff" stroke="#8f8f8f" stroke-width="1"/><path d="M8.500 0.500v4h4" fill="none" stroke="#8f8f8f" stroke-width="1"/></svg>
<span style="position:absolute;left:38.30px;top:804.10px;font-size:12px;line-height:15.60px;letter-spacing:0.000px;color:#000;white-space:pre;">runmods.rbt</span>
<span style="position:absolute;left:278.00px;top:803.02px;font-size:11.5px;line-height:14.95px;letter-spacing:-0.360px;color:#6d6d6d;white-space:pre;">09.02.2019 9:57</span>
<span style="position:absolute;left:422.50px;top:803.32px;font-size:11.5px;line-height:14.95px;letter-spacing:-0.313px;color:#6d6d6d;white-space:pre;">Файл "RBT"</span>
<span style="position:absolute;left:586.33px;top:803.02px;font-size:11.5px;line-height:14.95px;letter-spacing:-0.417px;color:#6d6d6d;white-space:pre;">2 КБ</span>
<svg style="position:absolute;left:20.00px;top:823.00px" width="16.00" height="16.00" viewBox="0 0 16 16"><path d="M0.500 0.500h8l4 4v11h-12z" fill="#fff" stroke="#8f8f8f" stroke-width="1"/><path d="M8.500 0.500v4h4" fill="none" stroke="#8f8f8f" stroke-width="1"/></svg>
<span style="position:absolute;left:38.30px;top:825.10px;font-size:12px;line-height:15.60px;letter-spacing:0.000px;color:#000;white-space:pre;">s0-loop</span>
<span style="position:absolute;left:278.00px;top:824.02px;font-size:11.5px;line-height:14.95px;letter-spacing:-0.360px;color:#6d6d6d;white-space:pre;">28.06.2016 6:14</span>
<span style="position:absolute;left:422.50px;top:824.32px;font-size:11.5px;line-height:14.95px;letter-spacing:-0.353px;color:#6d6d6d;white-space:pre;">Файл</span>
<span style="position:absolute;left:586.33px;top:824.02px;font-size:11.5px;line-height:14.95px;letter-spacing:-0.417px;color:#6d6d6d;white-space:pre;">1 КБ</span>
<svg style="position:absolute;left:20.00px;top:844.00px" width="16.00" height="16.00" viewBox="0 0 16 16"><path d="M0.500 0.500h8l4 4v11h-12z" fill="#fff" stroke="#8f8f8f" stroke-width="1"/><path d="M8.500 0.500v4h4" fill="none" stroke="#8f8f8f" stroke-width="1"/></svg>
<span style="position:absolute;left:38.30px;top:846.10px;font-size:12px;line-height:15.60px;letter-spacing:0.000px;color:#000;white-space:pre;">s0-mfg</span>
<span style="position:absolute;left:278.00px;top:845.02px;font-size:11.5px;line-height:14.95px;letter-spacing:-0.360px;color:#6d6d6d;white-space:pre;">28.06.2016 6:13</span>
<span style="position:absolute;left:422.50px;top:845.32px;font-size:11.5px;line-height:14.95px;letter-spacing:-0.353px;color:#6d6d6d;white-space:pre;">Файл</span>
<span style="position:absolute;left:586.33px;top:845.02px;font-size:11.5px;line-height:14.95px;letter-spacing:-0.417px;color:#6d6d6d;white-space:pre;">1 КБ</span>
<svg style="position:absolute;left:20.00px;top:865.00px" width="16.00" height="16.00" viewBox="0 0 16 16"><path d="M0.500 0.500h8l4 4v11h-12z" fill="#fff" stroke="#8f8f8f" stroke-width="1"/><path d="M8.500 0.500v4h4" fill="none" stroke="#8f8f8f" stroke-width="1"/></svg>
<span style="position:absolute;left:38.30px;top:867.10px;font-size:12px;line-height:15.60px;letter-spacing:0.000px;color:#000;white-space:pre;">s0-pcba</span>
<span style="position:absolute;left:278.00px;top:866.02px;font-size:11.5px;line-height:14.95px;letter-spacing:-0.364px;color:#6d6d6d;white-space:pre;">21.06.2016 10:50</span>
<span style="position:absolute;left:422.50px;top:866.32px;font-size:11.5px;line-height:14.95px;letter-spacing:-0.353px;color:#6d6d6d;white-space:pre;">Файл</span>
<span style="position:absolute;left:586.33px;top:866.02px;font-size:11.5px;line-height:14.95px;letter-spacing:-0.417px;color:#6d6d6d;white-space:pre;">1 КБ</span>
<svg style="position:absolute;left:20.00px;top:886.00px" width="16.00" height="16.00" viewBox="0 0 16 16"><path d="M0.500 0.500h8l4 4v11h-12z" fill="#fff" stroke="#8f8f8f" stroke-width="1"/><path d="M8.500 0.500v4h4" fill="none" stroke="#8f8f8f" stroke-width="1"/></svg>
<span style="position:absolute;left:38.30px;top:888.10px;font-size:12px;line-height:15.60px;letter-spacing:0.000px;color:#000;white-space:pre;">s1-loop</span>
<span style="position:absolute;left:278.00px;top:887.02px;font-size:11.5px;line-height:14.95px;letter-spacing:-0.360px;color:#6d6d6d;white-space:pre;">28.06.2016 6:13</span>
<span style="position:absolute;left:422.50px;top:887.32px;font-size:11.5px;line-height:14.95px;letter-spacing:-0.353px;color:#6d6d6d;white-space:pre;">Файл</span>
<span style="position:absolute;left:586.33px;top:887.02px;font-size:11.5px;line-height:14.95px;letter-spacing:-0.417px;color:#6d6d6d;white-space:pre;">1 КБ</span>
<svg style="position:absolute;left:20.00px;top:907.00px" width="16.00" height="16.00" viewBox="0 0 16 16"><path d="M0.500 0.500h8l4 4v11h-12z" fill="#fff" stroke="#8f8f8f" stroke-width="1"/><path d="M8.500 0.500v4h4" fill="none" stroke="#8f8f8f" stroke-width="1"/></svg>
<span style="position:absolute;left:38.30px;top:909.10px;font-size:12px;line-height:15.60px;letter-spacing:0.000px;color:#000;white-space:pre;">s1-mfg</span>
<span style="position:absolute;left:278.00px;top:908.02px;font-size:11.5px;line-height:14.95px;letter-spacing:-0.360px;color:#6d6d6d;white-space:pre;">28.06.2016 6:13</span>
<span style="position:absolute;left:422.50px;top:908.32px;font-size:11.5px;line-height:14.95px;letter-spacing:-0.353px;color:#6d6d6d;white-space:pre;">Файл</span>
<span style="position:absolute;left:586.33px;top:908.02px;font-size:11.5px;line-height:14.95px;letter-spacing:-0.417px;color:#6d6d6d;white-space:pre;">1 КБ</span>
<svg style="position:absolute;left:20.00px;top:928.00px" width="16.00" height="16.00" viewBox="0 0 16 16"><path d="M0.500 0.500h8l4 4v11h-12z" fill="#fff" stroke="#8f8f8f" stroke-width="1"/><path d="M8.500 0.500v4h4" fill="none" stroke="#8f8f8f" stroke-width="1"/></svg>
<span style="position:absolute;left:38.30px;top:930.10px;font-size:12px;line-height:15.60px;letter-spacing:0.000px;color:#000;white-space:pre;">s1-pcba</span>
<span style="position:absolute;left:278.00px;top:929.02px;font-size:11.5px;line-height:14.95px;letter-spacing:-0.364px;color:#6d6d6d;white-space:pre;">21.06.2016 10:54</span>
<span style="position:absolute;left:422.50px;top:929.32px;font-size:11.5px;line-height:14.95px;letter-spacing:-0.353px;color:#6d6d6d;white-space:pre;">Файл</span>
<span style="position:absolute;left:586.33px;top:929.02px;font-size:11.5px;line-height:14.95px;letter-spacing:-0.417px;color:#6d6d6d;white-space:pre;">1 КБ</span>
<span style="position:absolute;left:14.63px;top:966.06px;font-size:11.5px;line-height:14.95px;letter-spacing:0.013px;color:#1e3c7b;white-space:pre;">Элементов: 35</span>
<div style="position:absolute;left:100.00px;top:965.00px;width:1.00px;height:16.00px;background:#e2e2e2"></div>
<span style="position:absolute;left:113.37px;top:966.06px;font-size:11.5px;line-height:14.95px;letter-spacing:-0.034px;color:#1e3c7b;white-space:pre;">Выбран 1 элемент: 1,12 КБ</span>
<div style="position:absolute;left:266.00px;top:965.00px;width:1.00px;height:16.00px;background:#e2e2e2"></div>
<div style="position:absolute;left:1231.50px;top:960.00px;width:22.50px;height:24.00px;background:#d6edfb;border:1.800px solid #62b8f2"></div>
<svg style="position:absolute;left:1235.00px;top:965.00px" width="16.00" height="15.00" viewBox="0 0 16 15"><path d="M1.500 1h3v13h-3z" fill="#f4f0ec" stroke="#b9b4ae" stroke-width="0.600"/><path d="M2 10h2v3.500H2z" fill="#ef9a86"/><path d="M2 5.500h2v3H2z" fill="#cfe3f5"/><path d="M7 3h3M7 7.500h3M7 12h3M12 3h3M12 7.500h3M12 12h3" stroke="#7d8790" stroke-width="1.300"/></svg>
<svg style="position:absolute;left:1257.50px;top:965.00px" width="15.00" height="13.00" viewBox="0 0 15 13"><path d="M0.500 0.500h14v12h-14z" fill="#f3eee3" stroke="#cfc8ba" stroke-width="0.800"/><path d="M2 2h11v8H2z" fill="#5b9fe3"/><path d="M2 10L6 5.500l3 2.500 4-1v3z" fill="#6aa38a"/><path d="M8 4l5-1v3.500L9 8z" fill="#cfe6f7" opacity="0.700"/></svg>
<div style="position:absolute;left:369.00px;top:141.00px;width:756.00px;height:518.00px;background:#fff;box-shadow:0 5px 18px 1px rgba(0,0,0,0.30), 0 0 6px rgba(0,0,0,0.12)"></div>
<svg style="position:absolute;left:379.00px;top:147.50px" width="16.50" height="17.00" viewBox="0 0 16.500 17"><defs><linearGradient id="npg" x1="0" y1="0" x2="0.500" y2="1"><stop offset="0" stop-color="#c4e9f2"/><stop offset="1" stop-color="#6fc0d8"/></linearGradient></defs><path d="M5 1.500l11 0.500-1.500 14.500-10 0z" fill="#d2b48c"/><path d="M4 0.500l11 0.500-2.500 14L0.500 13.500z" fill="url(#npg)"/><path d="M4 0.500l11 0.500-0.300 1.500L3.600 2z" fill="#8fb7c8"/></svg>
<span style="position:absolute;left:399.91px;top:149.78px;font-size:11.5px;line-height:14.95px;letter-spacing:0.243px;color:#000;white-space:pre;">report – Блокнот</span>
<svg style="position:absolute;left:1003.00px;top:149.50px" width="12.00" height="12.00" viewBox="0 0 12 12"><path d="M0.500 6.500h10" stroke="#111" stroke-width="1.500"/></svg>
<svg style="position:absolute;left:1048.00px;top:149.50px" width="12.00" height="12.00" viewBox="0 0 12 12"><path d="M1.500 1.500h9v9h-9z" fill="none" stroke="#111" stroke-width="1.500"/></svg>
<svg style="position:absolute;left:1094.00px;top:149.50px" width="12.00" height="12.00" viewBox="0 0 12 12"><path d="M1 1l10 10M11 1L1 11" stroke="#111" stroke-width="1.500"/></svg>
<span style="position:absolute;left:378.51px;top:174.83px;font-size:11.5px;line-height:14.95px;letter-spacing:-0.211px;color:#000;white-space:pre;">Файл</span>
<span style="position:absolute;left:421.12px;top:174.83px;font-size:11.5px;line-height:14.95px;letter-spacing:0.139px;color:#000;white-space:pre;">Правка</span>
<span style="position:absolute;left:475.06px;top:174.83px;font-size:11.5px;line-height:14.95px;letter-spacing:0.262px;color:#000;white-space:pre;">Формат</span>
<span style="position:absolute;left:531.20px;top:174.83px;font-size:11.5px;line-height:14.95px;letter-spacing:-0.535px;color:#000;white-space:pre;">Вид</span>
<span style="position:absolute;left:565.94px;top:174.83px;font-size:11.5px;line-height:14.95px;letter-spacing:0.086px;color:#000;white-space:pre;">Справка</span>
<div style="position:absolute;left:371.00px;top:191.00px;width:752.00px;height:1.00px;background:#ececec"></div>
<div style="position:absolute;left:371px;top:192px;width:736.5px;height:426.6px;overflow:hidden;background:#fff"><pre class="mono" style="margin:0;position:absolute;left:3.500px;top:2.400px;font-size:13.333px;color:#000;transform:scaleY(1.11);transform-origin:0 0;line-height:16.216px">mats version 400.184.  Testing GK104 with 200 MB of memory starting with 0 MB.</pre><pre class="mono" style="margin:0;position:absolute;left:3.500px;top:38.400px;font-size:13.333px;color:#000;transform:scaleY(1.11);transform-origin:0 0;line-height:16.216px">Read    Error Count: 0</pre><pre class="mono" style="margin:0;position:absolute;left:3.500px;top:56.400px;font-size:13.333px;color:#000;transform:scaleY(1.11);transform-origin:0 0;line-height:16.216px">Write   Error Count: 0</pre><pre class="mono" style="margin:0;position:absolute;left:3.500px;top:74.400px;font-size:13.333px;color:#000;transform:scaleY(1.11);transform-origin:0 0;line-height:16.216px">Unknown Error Count: 0</pre><pre class="mono" style="margin:0;position:absolute;left:3.500px;top:110.400px;font-size:13.333px;color:#000;transform:scaleY(1.11);transform-origin:0 0;line-height:16.216px">=== MEMORY ERRORS BY SUBPARTITION ===</pre><pre class="mono" style="margin:0;position:absolute;left:3.500px;top:128.400px;font-size:13.333px;color:#000;transform:scaleY(1.11);transform-origin:0 0;line-height:16.216px">SUBPART READ ERRORS WRITE ERRORS UNKNOWN ERRS</pre><pre class="mono" style="margin:0;position:absolute;left:3.500px;top:146.400px;font-size:13.333px;color:#000;transform:scaleY(1.11);transform-origin:0 0;line-height:16.216px">------- ----------- ------------ ------------</pre><pre class="mono" style="margin:0;position:absolute;left:3.500px;top:164.400px;font-size:13.333px;color:#000;transform:scaleY(1.11);transform-origin:0 0;line-height:16.216px">FBIOA0            0            0            0</pre><pre class="mono" style="margin:0;position:absolute;left:3.500px;top:182.400px;font-size:13.333px;color:#000;transform:scaleY(1.11);transform-origin:0 0;line-height:16.216px">FBIOA1            0            0            0</pre><pre class="mono" style="margin:0;position:absolute;left:3.500px;top:200.400px;font-size:13.333px;color:#000;transform:scaleY(1.11);transform-origin:0 0;line-height:16.216px">FBIOB0            0            0            0</pre><pre class="mono" style="margin:0;position:absolute;left:3.500px;top:218.400px;font-size:13.333px;color:#000;transform:scaleY(1.11);transform-origin:0 0;line-height:16.216px">FBIOB1            0            0            0</pre><pre class="mono" style="margin:0;position:absolute;left:3.500px;top:236.400px;font-size:13.333px;color:#000;transform:scaleY(1.11);transform-origin:0 0;line-height:16.216px">FBIOC0            0            0            0</pre><pre class="mono" style="margin:0;position:absolute;left:3.500px;top:254.400px;font-size:13.333px;color:#000;transform:scaleY(1.11);transform-origin:0 0;line-height:16.216px">FBIOC1            0            0            0</pre><pre class="mono" style="margin:0;position:absolute;left:3.500px;top:272.400px;font-size:13.333px;color:#000;transform:scaleY(1.11);transform-origin:0 0;line-height:16.216px">FBIOD0            0            0            0</pre><pre class="mono" style="margin:0;position:absolute;left:3.500px;top:290.400px;font-size:13.333px;color:#000;transform:scaleY(1.11);transform-origin:0 0;line-height:16.216px">FBIOD1            0            0            0</pre><pre class="mono" style="margin:0;position:absolute;left:3.500px;top:326.400px;font-size:13.333px;color:#000;transform:scaleY(1.11);transform-origin:0 0;line-height:16.216px">Failing Bits:</pre><pre class="mono" style="margin:0;position:absolute;left:3.500px;top:344.400px;font-size:13.333px;color:#000;transform:scaleY(1.11);transform-origin:0 0;line-height:16.216px">   None</pre><pre class="mono" style="margin:0;position:absolute;left:3.500px;top:416.400px;font-size:13.333px;color:#000;transform:scaleY(1.11);transform-origin:0 0;line-height:16.216px">Error Code = 00000000 (OK)</pre><div style="position:absolute;left:3px;top:3px;width:1.300px;height:17px;background:#000"></div></div>
<div style="position:absolute;left:1107.50px;top:192.00px;width:15.50px;height:426.60px;background:#f0f0f0"></div>
<div style="position:absolute;left:1107.50px;top:209.01px;width:15.50px;height:244.48px;background:#cdcdcd"></div>
<svg style="position:absolute;left:1110.80px;top:196.50px" width="9.00" height="9.00" viewBox="0 0 9 9"><path d="M1 6.500l3.500-3.500 3.500 3.500" fill="none" stroke="#2a2a2a" stroke-width="1.900"/></svg>
<svg style="position:absolute;left:1110.80px;top:605.00px" width="9.00" height="9.00" viewBox="0 0 9 9"><path d="M1 2.500l3.500 3.500 3.500-3.500" fill="none" stroke="#2a2a2a" stroke-width="1.900"/></svg>
<div style="position:absolute;left:371.00px;top:618.60px;width:752.00px;height:15.70px;background:#f0f0f0"></div>
<svg style="position:absolute;left:374.00px;top:622.60px" width="9.00" height="9.00" viewBox="0 0 9 9"><path d="M6 1L2.500 4.500 6 8" fill="none" stroke="#b8b8b8" stroke-width="1.300"/></svg>
<svg style="position:absolute;left:1094.50px;top:622.60px" width="9.00" height="9.00" viewBox="0 0 9 9"><path d="M3 1l3.500 3.500L3 8" fill="none" stroke="#b8b8b8" stroke-width="1.300"/></svg>
<div style="position:absolute;left:371.00px;top:634.30px;width:752.00px;height:22.70px;background:#f0f0f0;border-top:1px solid #d7d7d7"></div>
<div style="position:absolute;left:692.30px;top:636.30px;width:1.00px;height:20.00px;background:#d7d7d7"></div>
<div style="position:absolute;left:832.00px;top:636.30px;width:1.00px;height:20.00px;background:#d7d7d7"></div>
<div style="position:absolute;left:883.00px;top:636.30px;width:1.00px;height:20.00px;background:#d7d7d7"></div>
<div style="position:absolute;left:1003.00px;top:636.30px;width:1.00px;height:20.00px;background:#d7d7d7"></div>
<span style="position:absolute;left:702.72px;top:640.57px;font-size:11.5px;line-height:14.95px;letter-spacing:-0.262px;color:#000;white-space:pre;">Стр 1, стлб 1</span>
<span style="position:absolute;left:841.14px;top:640.57px;font-size:11.5px;line-height:14.95px;letter-spacing:-0.724px;color:#000;white-space:pre;">100%</span>
<span style="position:absolute;left:890.15px;top:640.57px;font-size:11.5px;line-height:14.95px;letter-spacing:-0.427px;color:#000;white-space:pre;">UNIX (LF)</span>
<span style="position:absolute;left:1009.92px;top:640.57px;font-size:11.5px;line-height:14.95px;letter-spacing:-0.481px;color:#000;white-space:pre;">UTF-8</span>
<svg style="position:absolute;left:1113.00px;top:647.00px" width="9.00" height="9.00" viewBox="0 0 9 9"><path d="M7 1v1.500M7 4v1.500M7 7v1.500M4 4v1.500M4 7v1.500M1 7v1.500" stroke="#b8b8b8" stroke-width="1.800"/></svg>
<div style="position:absolute;left:369.00px;top:141.00px;width:2.00px;height:518.00px;background:#7c7c7c"></div>
<div style="position:absolute;left:1123.00px;top:141.00px;width:2.00px;height:518.00px;background:#7c7c7c"></div>
<div style="position:absolute;left:369.00px;top:141.00px;width:756.00px;height:2.00px;background:#7c7c7c"></div>
<div style="position:absolute;left:369.00px;top:657.00px;width:756.00px;height:2.00px;background:#7c7c7c"></div>
<div style="position:absolute;left:0.00px;top:984.00px;width:1280.00px;height:40.00px;background:#1f2731"></div>
<svg style="position:absolute;left:16.00px;top:996.00px" width="17.00" height="17.00" viewBox="0 0 17 17"><path d="M0 2.400L7 1.400v6.800H0zM8 1.250L17 0v8.200H8zM0 9.100h7v6.800L0 14.900zM8 9.100h9V17L8 15.750z" fill="#fff"/></svg>
<div style="position:absolute;left:48.50px;top:984.00px;width:344.00px;height:40.00px;background:#f3f3f3;border:1px solid #fff;border-bottom:none;border-right:none"></div>
<svg style="position:absolute;left:60.00px;top:995.00px" width="18.00" height="18.00" viewBox="0 0 18 18"><circle cx="11" cy="7" r="5.200" fill="none" stroke="#333" stroke-width="1.400"/><path d="M7.300 10.700L1.500 16.500" stroke="#333" stroke-width="1.500"/></svg>
<span style="position:absolute;left:88.32px;top:995.19px;font-size:14.5px;line-height:18.85px;letter-spacing:0.008px;color:#2b2b2b;white-space:pre;">Введите здесь текст для поиска</span>
<svg style="position:absolute;left:406.82px;top:995.00px" width="18.00" height="18.00" viewBox="0 0 18 18"><circle cx="9" cy="9" r="6.400" fill="none" stroke="#fff" stroke-width="2.700"/></svg>
<svg style="position:absolute;left:453.73px;top:995.00px" width="20.00" height="18.00" viewBox="0 0 20 18"><path d="M2.500 2.500h11v13h-11z" fill="none" stroke="#fff" stroke-width="1.500"/><path d="M2.500 5.200h11M2.500 12.800h11" stroke="#fff" stroke-width="1"/><path d="M17.200 6v10" stroke="#fff" stroke-width="1.700"/><path d="M17.200 2v1.800" stroke="#fff" stroke-width="1.700"/></svg>
<svg style="position:absolute;left:502.67px;top:992.30px" width="25.00" height="25.00" viewBox="0 0 24 24"><defs><linearGradient id="eg" x1="0" y1="0" x2="1" y2="1"><stop offset="0" stop-color="#35c1f1"/><stop offset="0.500" stop-color="#1a9fe0"/><stop offset="1" stop-color="#0c59a4"/></linearGradient><linearGradient id="eg2" x1="0" y1="0" x2="1" y2="0"><stop offset="0" stop-color="#3bd36a"/><stop offset="1" stop-color="#27b8e8"/></linearGradient></defs><circle cx="12" cy="12" r="11" fill="url(#eg)"/><path d="M1.200 11C2 5 6.500 1 12 1c6 0 11 4.300 11 9.500 0 3-2.300 5-5.200 5-2 0-3.300-0.800-3.300-1.800 0-0.800 1-1.200 1-3 0-2.500-2.300-4.700-5.600-4.700-4 0-7.400 2.500-8.700 5z" fill="url(#eg2)"/><path d="M9 13.500c0 4 3 7.500 8 7.500 1.700 0 3-0.400 4-1-2 2-4.800 3-8 3-5 0-8.500-3.600-8.500-7.600 0-3 2-5 5-5.500-0.300 0.900-0.500 2.200-0.500 3.600z" fill="#0b4f9c"/></svg>
<svg style="position:absolute;left:552.27px;top:994.30px" width="22.60" height="19.20" viewBox="0 0 24 22"><path d="M1 1.500h8l2 2.500h12v4H1z" fill="#e6a920"/><path d="M1 5.500h22v14.500H1z" fill="#ffd65c"/><path d="M1 13.500h22v6.500H1z" fill="#3a96e8"/><path d="M7.500 12h9v8h-9z" fill="#ffd65c"/><path d="M9.500 15h5v5h-5z" fill="#3a96e8"/></svg>
<div style="position:absolute;left:544.55px;top:1022.00px;width:38.40px;height:2.00px;background:#9fcdf0"></div>
<svg style="position:absolute;left:599.84px;top:990.50px" width="24.50" height="26.50" viewBox="0 0 22 24"><path d="M7 7V5a4 4 0 0 1 8 0v2" fill="none" stroke="#f1f1f1" stroke-width="2"/><path d="M1 7h20v16H1z" fill="#f4f4f4"/><path d="M6.500 11h4v4h-4z" fill="#f25022"/><path d="M11.500 11h4v4h-4z" fill="#7fba00"/><path d="M6.500 16h4v4h-4z" fill="#00a4ef"/><path d="M11.500 16h4v4h-4z" fill="#ffb900"/></svg>
<svg style="position:absolute;left:649.49px;top:992.50px" width="26.00" height="23.00" viewBox="0 0 26 23"><path d="M0.500 8L13 0l12.500 8v14.500H0.500z" fill="#0f6cc0"/><path d="M3.500 7.500h19v9h-19z" fill="#fff"/><path d="M0.500 8.500L13 15.500 25.500 8.500V22.500H0.500z" fill="#2fa6f3"/><path d="M0.500 22.500L13 14l12.500 8.500z" fill="#1f93e6"/></svg>
<svg style="position:absolute;left:698.03px;top:992.00px" width="24.00" height="24.00" viewBox="0 0 24 24"><g transform="rotate(-40 12 12)"><path d="M1 9h15v6H1z" fill="#9a9a9a"/><path d="M1 9h6v6H1z" fill="#ededed"/><path d="M16 9.800h7v4.400h-7z" fill="#d9d9d9"/><path d="M8.500 10.500h6v3h-6z" fill="#5d5d5d"/><path d="M18 11h1.500v2H18zM20.500 11H22v2h-1.500z" fill="#666"/></g></svg>
<div style="position:absolute;left:736.73px;top:984.00px;width:46.99px;height:40.00px;background:#444c58"></div>
<div style="position:absolute;left:736.73px;top:1022.00px;width:46.99px;height:2.00px;background:#9fcdf0"></div>
<svg style="position:absolute;left:747.73px;top:992.50px" width="25.00" height="23.00" viewBox="0 0 25 23"><defs><linearGradient id="ng" x1="0" y1="0" x2="0.400" y2="1"><stop offset="0" stop-color="#d4f1f7"/><stop offset="1" stop-color="#3f9fb8"/></linearGradient></defs><path d="M8 1.500l14 1.500-2 17.500-2 1.500z" fill="#c9a56b"/><path d="M7 1.500l13.500 1.200L17.500 21.500 1.500 18.500z" fill="url(#ng)"/><path d="M7 1.500l13.500 1.200-0.500 2.300L6.300 3.500z" fill="#e9f8fb"/><path d="M1.500 18.500l16 3 0.300-1.200L2 17.300z" fill="#2b7f99"/></svg>
<svg style="position:absolute;left:1008.77px;top:998.00px" width="14.00" height="12.00" viewBox="0 0 14 12"><path d="M1.500 9L7 3.500 12.500 9" fill="none" stroke="#fff" stroke-width="1.900"/></svg>
<svg style="position:absolute;left:1033.01px;top:994.00px" width="16.00" height="20.00" viewBox="0 0 16 20"><path d="M2.500 5.500h9v9h-9z" fill="none" stroke="#fff" stroke-width="1.300"/><circle cx="7" cy="10" r="1.800" fill="#fff"/><path d="M11.500 8.500l3-1.500v6l-3-1.500" fill="#fff"/><path d="M4 3a4 2.500 0 0 1 6 0M4 17a4 2.500 0 0 0 6 0" fill="none" stroke="#fff" stroke-width="1.200"/></svg>
<svg style="position:absolute;left:1055.78px;top:997.00px" width="18.00" height="13.00" viewBox="0 0 18 13"><path d="M4.500 12a3.700 3.700 0 0 1-0.500-7.300 5 5 0 0 1 9.300-0.700 4 4 0 0 1 0.700 8z" fill="#fff"/></svg>
<svg style="position:absolute;left:1078.82px;top:995.00px" width="18.00" height="18.00" viewBox="0 0 18 18"><path d="M5 3.500h12v8.500H5z" fill="none" stroke="#fff" stroke-width="1.300"/><path d="M8 15.500h6M11 12v3.500" stroke="#fff" stroke-width="1.300"/><path d="M1 5h5.500v9H1z" fill="#1f2731" stroke="#fff" stroke-width="1.200"/><path d="M2.500 15.500h2.500" stroke="#fff" stroke-width="1.200"/></svg>
<svg style="position:absolute;left:1102.77px;top:995.00px" width="18.00" height="18.00" viewBox="0 0 18 18"><path d="M1.500 6.500h3l4-3.500v12l-4-3.500h-3z" fill="none" stroke="#fff" stroke-width="1.200"/><path d="M11 6.500a3.500 3.500 0 0 1 0 5M13 4.500a6 6 0 0 1 0 9M15 3a8.500 8.500 0 0 1 0 12" fill="none" stroke="#fff" stroke-width="1.100"/></svg>
<span style="position:absolute;left:1131.34px;top:996.78px;font-size:11.5px;line-height:14.95px;letter-spacing:0.004px;color:#fff;white-space:pre;">РУС</span>
<span style="position:absolute;left:1181.81px;top:986.54px;font-size:11.5px;line-height:14.95px;letter-spacing:0.119px;color:#fff;white-space:pre;">8:45</span>
<span style="position:absolute;left:1166.26px;top:1005.55px;font-size:11.5px;line-height:14.95px;letter-spacing:-0.361px;color:#fff;white-space:pre;">16.02.2021</span>
<svg style="position:absolute;left:1237.54px;top:995.00px" width="18.00" height="18.00" viewBox="0 0 18 18"><path d="M1.500 1.500h15v11.500h-5l-2.500 2.500-2.500-2.500h-5z" fill="none" stroke="#fff" stroke-width="1.300"/></svg>
<div style="position:absolute;left:1274.30px;top:984.00px;width:1.60px;height:40.00px;background:#8c909a"></div>
</div></body></html>
